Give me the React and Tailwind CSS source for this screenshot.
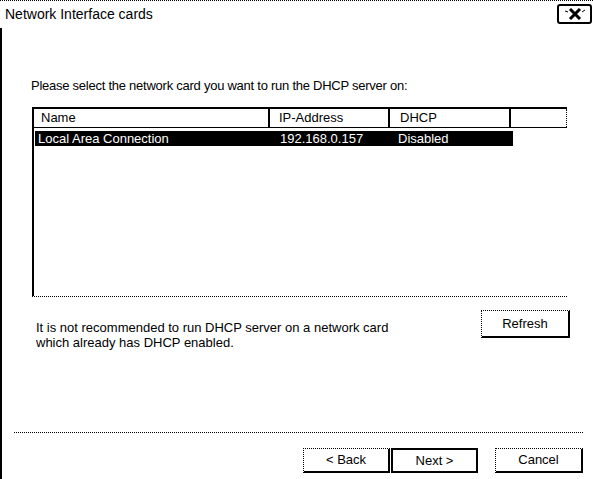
import React from "react";

function Btn({ children, def, w }) {
  return (
    <div
      className={
        def
          ? `shrink-0 ${w} flex items-center justify-center border-2 border-black text-[13px]`
          : `shrink-0 ${w} flex items-center justify-center border-t border-l border-r-2 border-b-2 border-black [border-style:dotted_solid_solid_dotted] text-[13px]`
      }
    >
      {children}
    </div>
  );
}

export default function App() {
  return (
    <div className="w-[593px] h-[479px] bg-white text-black overflow-hidden font-['Liberation_Sans',Arial,sans-serif]">
      {/* title bar */}
      <div className="h-[28px] flex items-start justify-between border-t border-dotted border-black">
        <div className="pl-[5px] pt-[5px] text-[14px] leading-[16px]">Network Interface cards</div>
        <div className="mt-[3px] mr-[1px] w-[35px] h-[20px] border-2 border-black rounded-[3px] flex items-center justify-center">
          <svg width="22" height="12" viewBox="0 0 22 12">
            <path d="M6 1 L16 11 M16 1 L6 11" stroke="black" strokeWidth="3" />
            <path d="M1 3 L4 4 M18 4 L21 2" stroke="black" strokeWidth="1" />
          </svg>
        </div>
      </div>

      {/* body */}
      <div className="h-[451px] border-l-2 border-black flex flex-col">
        <div className="shrink-0 pt-[51px] pl-[29px] text-[13px] leading-[14px] tracking-[-0.25px]">
          Please select the network card you want to run the DHCP server on:
        </div>

        {/* list */}
        <div className="shrink-0 mt-[14px] ml-[30px] w-[535px] h-[190px] border-t-2 border-l-2 border-black border-b border-b-black [border-bottom-style:dotted] flex flex-col">
          <div className="shrink-0 h-[19px] flex border-b border-black text-[13px] leading-[17px]">
            <div className="w-[236px] pl-[7px] border-r-2 border-black">Name</div>
            <div className="w-[120px] pl-[9px] border-r-2 border-black">IP-Address</div>
            <div className="w-[121px] pl-[10px] border-r-2 border-black">DHCP</div>
            <div className="flex-1 border-r border-dotted border-black"></div>
          </div>
          <div className="shrink-0 mt-[3px] ml-[1px] w-[478px] h-[15px] bg-black text-white flex text-[13px] leading-[15px]">
            <div className="w-[235px] pl-[3px]">Local Area Connection</div>
            <div className="w-[121px] pl-[10px]">192.168.0.157</div>
            <div className="flex-1 pl-[7px]">Disabled</div>
          </div>
        </div>

        {/* warning + refresh */}
        <div className="shrink-0 h-[40px] mt-[13px] ml-[30px] w-[538px] flex justify-between items-start">
          <div className="mt-[10px] pl-[4px] text-[13px] leading-[15px]">
            <div>It is not recommended to run DHCP server on a network card</div>
            <div>which already has DHCP enabled.</div>
          </div>
          <Btn w="w-[89px] h-[28px]">Refresh</Btn>
        </div>

        {/* separator */}
        <div className="shrink-0 mt-[82px] ml-[12px] w-[569px] border-t border-dotted border-black"></div>

        {/* buttons */}
        <div className="shrink-0 mt-[15px] w-[581px] flex justify-end">
          <Btn w="w-[87px] h-[25px]">&lt; Back</Btn>
          <div className="ml-[1px]"><Btn def w="w-[87px] h-[25px]">Next &gt;</Btn></div>
          <div className="ml-[17px]"><Btn w="w-[88px] h-[25px]">Cancel</Btn></div>
        </div>
      </div>
    </div>
  );
}
